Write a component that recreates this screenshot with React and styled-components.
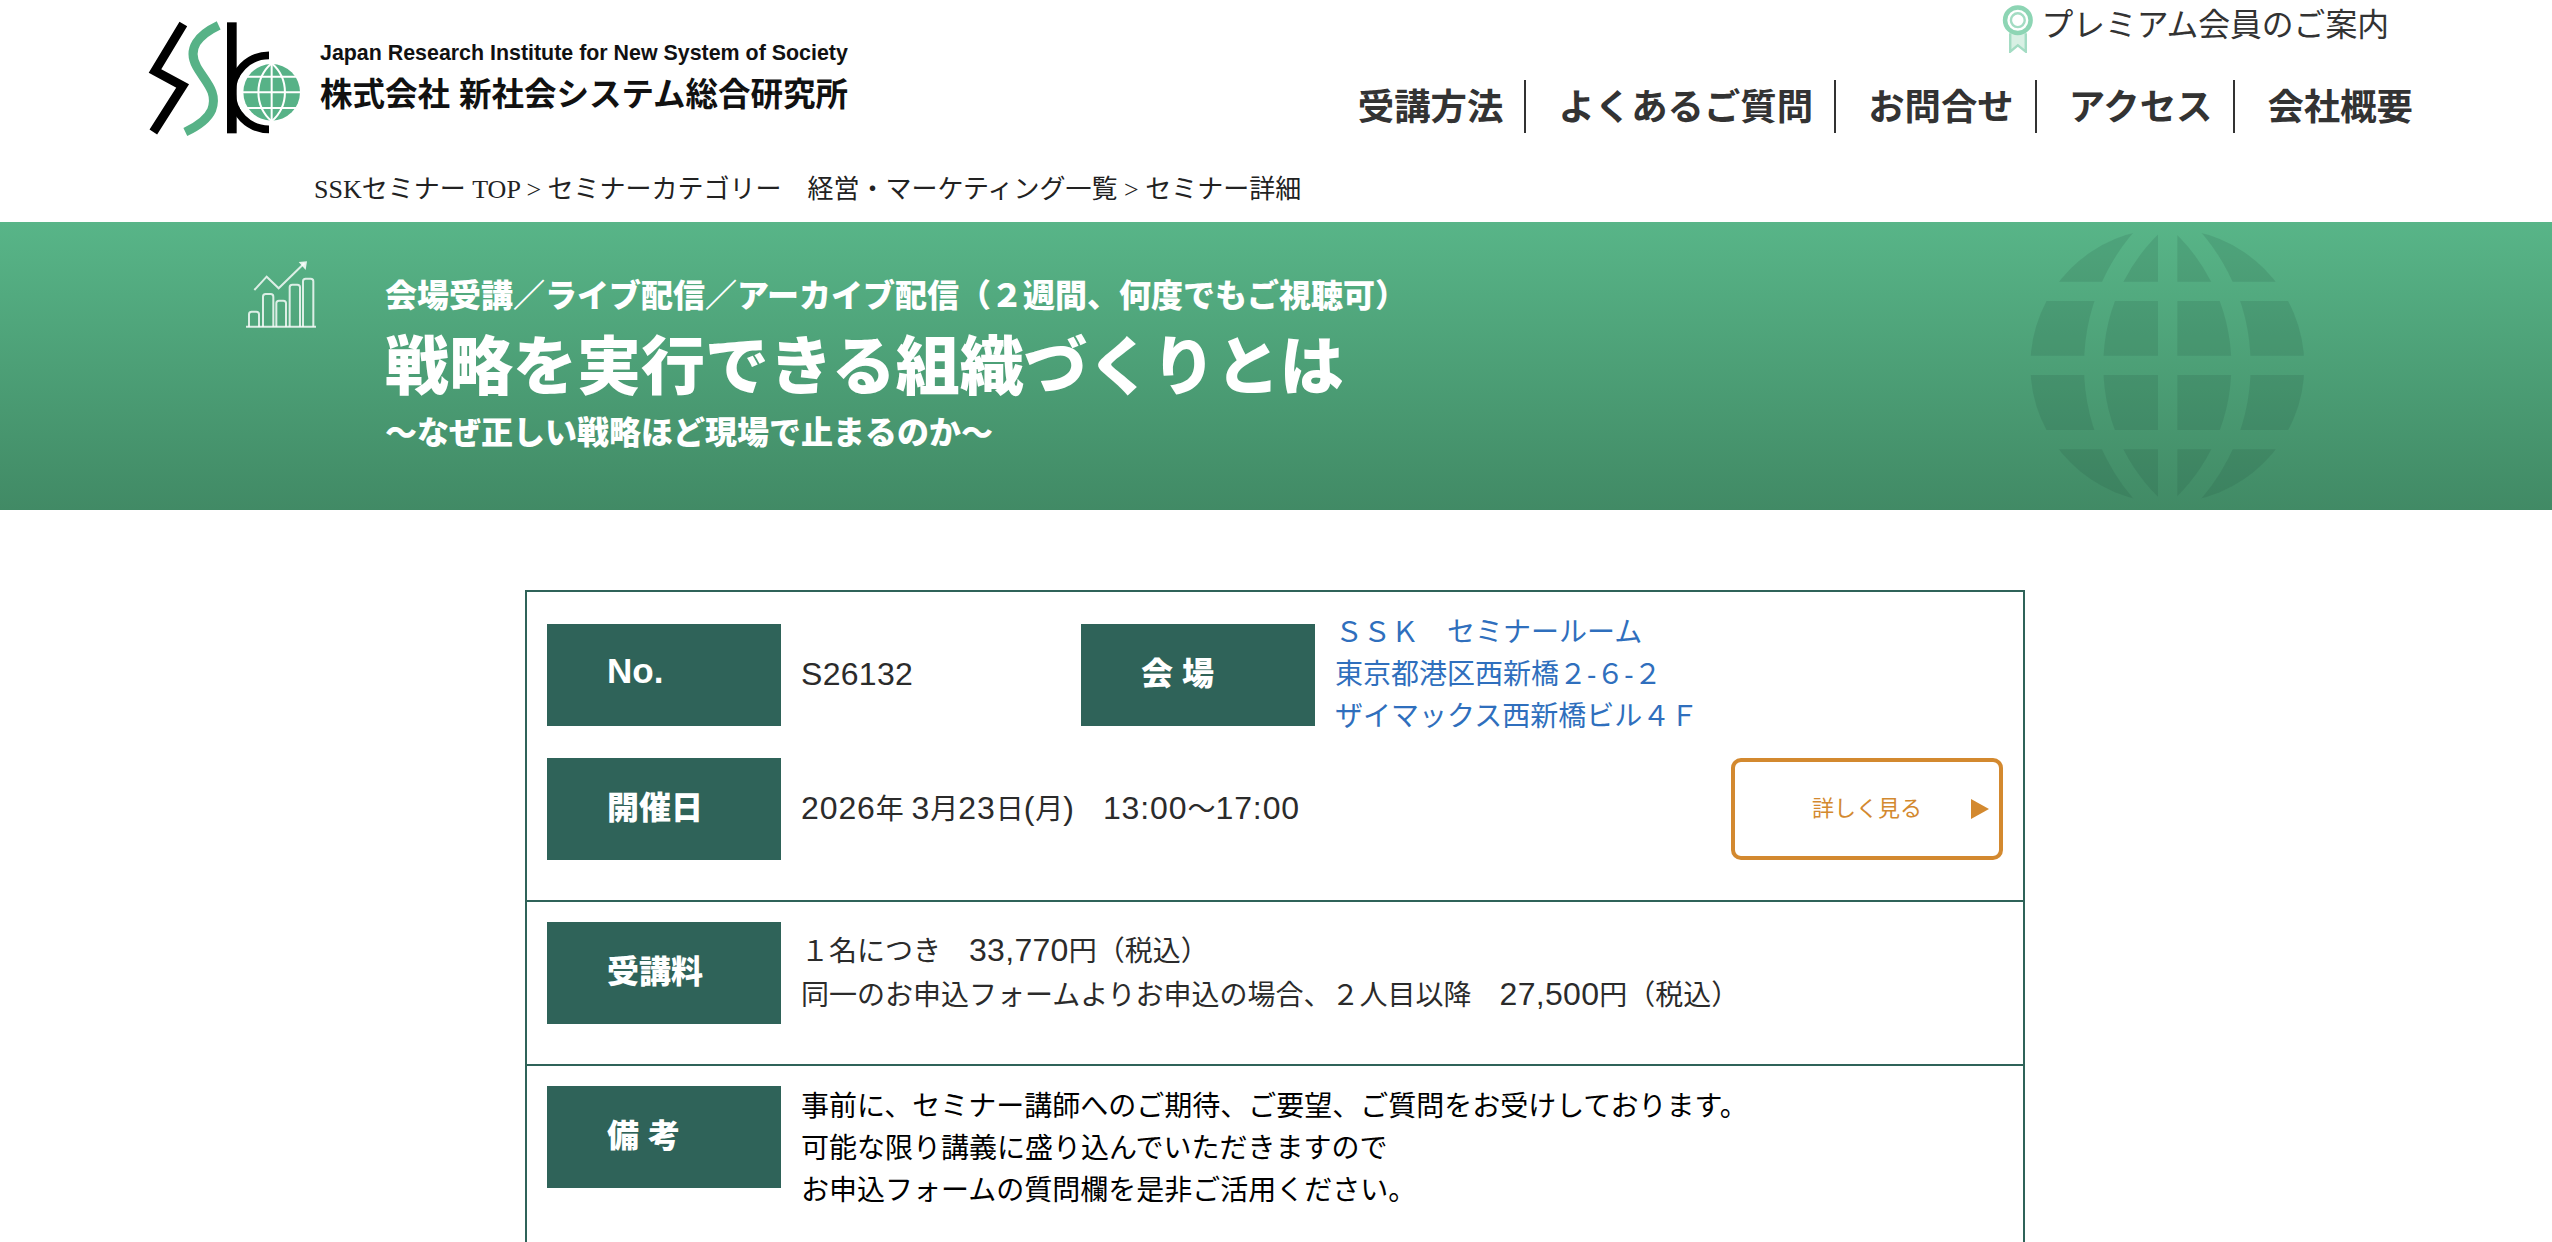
import React from 'react';
import styled, { createGlobalStyle } from 'styled-components';

const sans = '"Liberation Sans", "Noto Sans CJK JP", sans-serif';
const serif = '"Liberation Serif", "Noto Sans CJK JP", serif';
const dark = '#2f6359';

const Global = createGlobalStyle`
  html, body {
    margin: 0;
    padding: 0;
    background: #fff;
  }
  html {
    height: 1242px;
    overflow: hidden;
  }
  body {
    height: 1242px;
    overflow: hidden;
    font-family: ${sans};
    color: #222;
  }
`;

const Header = styled.header`
  display: flex;
  justify-content: space-between;
  height: 150px;
  padding-right: 139px;
`;

const Logo = styled.div`
  display: flex;
  padding: 10px 0 0 130px;
`;

const LogoText = styled.div`
  display: flex;
  flex-direction: column;
  padding-top: 32px;
  color: #111;
  font-weight: 700;
  white-space: nowrap;
`;

const LogoEn = styled.div`
  font-size: 21.4px;
  line-height: 22px;
`;

const LogoJa = styled.div`
  margin-top: 13px;
  font-size: 32.5px;
  line-height: 36px;
`;

const HeaderRight = styled.div`
  display: flex;
  flex-direction: column;
  align-items: flex-end;
`;

const Premium = styled.a`
  display: flex;
  align-items: flex-start;
  gap: 7px;
  height: 46px;
  margin: 5px 24px 0 0;
  font-family: ${serif};
  font-size: 31.8px;
  line-height: 42px;
  color: #333;
`;

const Nav = styled.nav`
  display: flex;
  margin-top: 29px;
`;

const NavItem = styled.a`
  display: flex;
  align-items: center;
  height: 53px;
  box-sizing: border-box;
  padding: 0 ${(p) => (p.$last ? 0 : 21)}px 5px 32px;
  border-right: ${(p) => (p.$last ? 'none' : '2px solid #333')};
  font-family: ${serif};
  font-size: 36.4px;
  font-weight: 700;
  color: #333;
  white-space: nowrap;
`;

const Breadcrumb = styled.div`
  height: 72px;
  box-sizing: border-box;
  padding: 22px 0 0 314px;
  font-family: ${serif};
  font-size: 26px;
  line-height: 36px;
  color: #222;
  white-space: nowrap;
`;

const Banner = styled.section`
  position: relative;
  display: flex;
  height: 288px;
  padding-left: 246px;
  background: linear-gradient(180deg, #58b588 0%, #418a65 100%);
  overflow: hidden;
`;

const ChartWrap = styled.div`
  width: 139px;
  padding-top: 38px;
`;

const BannerText = styled.div`
  display: flex;
  flex-direction: column;
  padding-top: 56px;
  color: #fff;
  font-weight: 900;
  white-space: nowrap;
`;

const BannerLead = styled.div`
  font-size: 32px;
  line-height: 36px;
`;

const BannerTitle = styled.h1`
  margin: 17px 0 0;
  font-size: 64px;
  line-height: 72px;
  font-weight: 900;
`;

const BannerSub = styled.div`
  margin-top: 12px;
  font-size: 32px;
  line-height: 36px;
`;

const GlobeMark = styled.svg`
  position: absolute;
  left: 1960px;
  top: -22px;
`;

const Table = styled.div`
  width: 1496px;
  margin: 80px 0 0 525px;
  border: 2px solid ${dark};
`;

const Row = styled.div`
  display: flex;
  flex-direction: column;
  gap: 32px;
  padding: ${(p) => p.$top}px 20px ${(p) => p.$bottom}px;
  & + & {
    border-top: 2px solid ${dark};
  }
`;

const Line = styled.div`
  display: flex;
  align-items: ${(p) => (p.$top ? 'flex-start' : 'center')};
  height: 102px;
`;

const Label = styled.div`
  display: flex;
  align-items: center;
  flex: none;
  width: 234px;
  height: 102px;
  box-sizing: border-box;
  padding: 0 0 8px 60px;
  background: ${dark};
  color: #fff;
  font-size: 32px;
  font-weight: 900;
  white-space: pre;
`;

const LabelLatin = styled.span`
  font-size: 35px;
  font-weight: 700;
`;

const Num = styled.span`
  font-size: 32px;
  letter-spacing: 0.3px;
`;

const Value = styled.div`
  flex: ${(p) => (p.$width ? 'none' : 1)};
  width: ${(p) => (p.$width ? `${p.$width}px` : 'auto')};
  box-sizing: border-box;
  padding-left: 20px;
  font-size: 28px;
  line-height: 42px;
  color: ${(p) => (p.$black ? '#000' : '#2b2b2b')};
  white-space: nowrap;
`;

const DateValue = styled(Value)`
  ${Num} {
    letter-spacing: 0.9px;
  }
`;

const VenueLink = styled.a`
  color: #2f6fbd;
`;

const DetailButton = styled.a`
  position: relative;
  display: flex;
  align-items: center;
  justify-content: center;
  flex: none;
  width: 272px;
  height: 102px;
  box-sizing: border-box;
  padding-bottom: 6px;
  border: 4px solid #d3892f;
  border-radius: 10px;
  color: #d3892f;
  font-size: 22px;
`;

const Arrow = styled.span`
  position: absolute;
  right: 10px;
  top: 37px;
  width: 0;
  height: 0;
  border-style: solid;
  border-width: 10px 0 10px 18px;
  border-color: transparent transparent transparent #d3892f;
`;

function SskLogo() {
  return (
    <svg width="190" height="130" viewBox="0 0 570 390">
      <path d="M160 42 L75 183 L158 228 L70 366" fill="none" stroke="#000" strokeWidth="27" />
      <path
        d="M266 46 C205 75 170 115 200 170 C225 215 265 245 245 300 C232 330 200 350 166 366"
        fill="none"
        stroke="#57b287"
        strokeWidth="27"
      />
      <rect x="291" y="37" width="29" height="333" fill="#000" />
      <path d="M417 136 A110 110 0 0 0 417 358" fill="none" stroke="#000" strokeWidth="23" />
      <circle cx="425" cy="247" r="91" fill="#fff" />
      <circle cx="425" cy="247" r="85" fill="#57b287" />
      <g fill="none" stroke="#fff" strokeWidth="6">
        <path d="M330 200 H520 M330 247 H520 M330 294 H520 M425 155 V340" />
        <path d="M425 160 A115 115 0 0 0 425 334 M425 160 A115 115 0 0 1 425 334" />
      </g>
    </svg>
  );
}

function MedalIcon() {
  return (
    <svg width="32" height="48" viewBox="43 13 89 139">
      <path d="M65 95 V148 L87 130 L110 148 V95" fill="#d8f0e4" stroke="#a3dcc3" strokeWidth="7" />
      <circle cx="87" cy="57" r="37" fill="#fff" stroke="#8dd5b4" strokeWidth="13" />
      <circle cx="87" cy="57" r="20" fill="#fff" stroke="#a3dcc3" strokeWidth="7" />
    </svg>
  );
}

function ChartIcon() {
  const bars = [
    [54, 217, 30],
    [96, 164, 31],
    [136, 184, 29],
    [176, 136, 31],
    [216, 118, 31],
  ];
  return (
    <svg width="70" height="68" viewBox="45 62 210 204">
      <g fill="none" stroke="#fff" strokeOpacity="0.8" strokeWidth="6">
        {bars.map(([x, y, w]) => (
          <path key={x} d={`M${x} 262 V${y + 8} Q${x} ${y} ${x + 8} ${y} H${x + w - 8} Q${x + w} ${y} ${x + w} ${y + 8} V262`} />
        ))}
        <path d="M45 262 H255" />
        <path d="M70 152 L107 112 L143 147 L220 72" />
      </g>
      <path d="M203 68 L228 66 L224 92 Z" fill="#fff" fillOpacity="0.85" />
    </svg>
  );
}

function GlobeWatermark() {
  return (
    <GlobeMark width="400" height="320" viewBox="0 0 1200 960">
      <defs>
        <mask id="globe-lines">
          <circle cx="622" cy="497" r="411" fill="#fff" />
          <g fill="none" stroke="#000" strokeWidth="58">
            <path d="M150 274 H1100 M150 496 H1100 M150 719 H1100 M623 40 V950" />
            <path d="M622 40 A583 583 0 0 0 622 954 M622 40 A583 583 0 0 1 622 954" />
          </g>
        </mask>
      </defs>
      <rect x="150" y="40" width="950" height="920" fill="#1f4a3c" fillOpacity="0.14" mask="url(#globe-lines)" />
    </GlobeMark>
  );
}

const navItems = ['受講方法', 'よくあるご質問', 'お問合せ', 'アクセス', '会社概要'];

export default function App() {
  return (
    <>
      <Global />
      <Header>
        <Logo>
          <SskLogo />
          <LogoText>
            <LogoEn>Japan Research Institute for New System of Society</LogoEn>
            <LogoJa>株式会社 新社会システム総合研究所</LogoJa>
          </LogoText>
        </Logo>
        <HeaderRight>
          <Premium>
            <MedalIcon />
            プレミアム会員のご案内
          </Premium>
          <Nav>
            {navItems.map((item, i) => (
              <NavItem key={item} $last={i === navItems.length - 1}>
                {item}
              </NavItem>
            ))}
          </Nav>
        </HeaderRight>
      </Header>
      <Breadcrumb>SSKセミナー TOP &gt; セミナーカテゴリー　経営・マーケティング一覧 &gt; セミナー詳細</Breadcrumb>
      <Banner>
        <ChartWrap>
          <ChartIcon />
        </ChartWrap>
        <BannerText>
          <BannerLead>会場受講／ライブ配信／アーカイブ配信（２週間、何度でもご視聴可）</BannerLead>
          <BannerTitle>戦略を実行できる組織づくりとは</BannerTitle>
          <BannerSub>～なぜ正しい戦略ほど現場で止まるのか～</BannerSub>
        </BannerText>
        <GlobeWatermark />
      </Banner>
      <Table>
        <Row $top={32} $bottom={40}>
          <Line>
            <Label>
              <LabelLatin>No.</LabelLatin>
            </Label>
            <Value $width={300}>
              <Num>S26132</Num>
            </Value>
            <Label>会 場</Label>
            <Value>
              <VenueLink>
                ＳＳＫ　セミナールーム
                <br />
                東京都港区西新橋２-６-２
                <br />
                ザイマックス西新橋ビル４Ｆ
              </VenueLink>
            </Value>
          </Line>
          <Line>
            <Label>開催日</Label>
            <DateValue>
              <Num>2026</Num>年 <Num>3</Num>月<Num>23</Num>日<Num>(</Num>月<Num>)</Num>　<Num>13:00</Num>～<Num>17:00</Num>
            </DateValue>
            <DetailButton>
              詳しく見る
              <Arrow />
            </DetailButton>
          </Line>
        </Row>
        <Row $top={20} $bottom={40}>
          <Line>
            <Label>受講料</Label>
            <Value>
              １名につき　<Num>33,770</Num>円（税込）
              <br />
              同一のお申込フォームよりお申込の場合、２人目以降　<Num>27,500</Num>円（税込）
            </Value>
          </Line>
        </Row>
        <Row $top={20} $bottom={200}>
          <Line $top>
            <Label>備 考</Label>
            <Value $black>
              事前に、セミナー講師へのご期待、ご要望、ご質問をお受けしております。
              <br />
              可能な限り講義に盛り込んでいただきますので
              <br />
              お申込フォームの質問欄を是非ご活用ください。
            </Value>
          </Line>
        </Row>
      </Table>
    </>
  );
}
